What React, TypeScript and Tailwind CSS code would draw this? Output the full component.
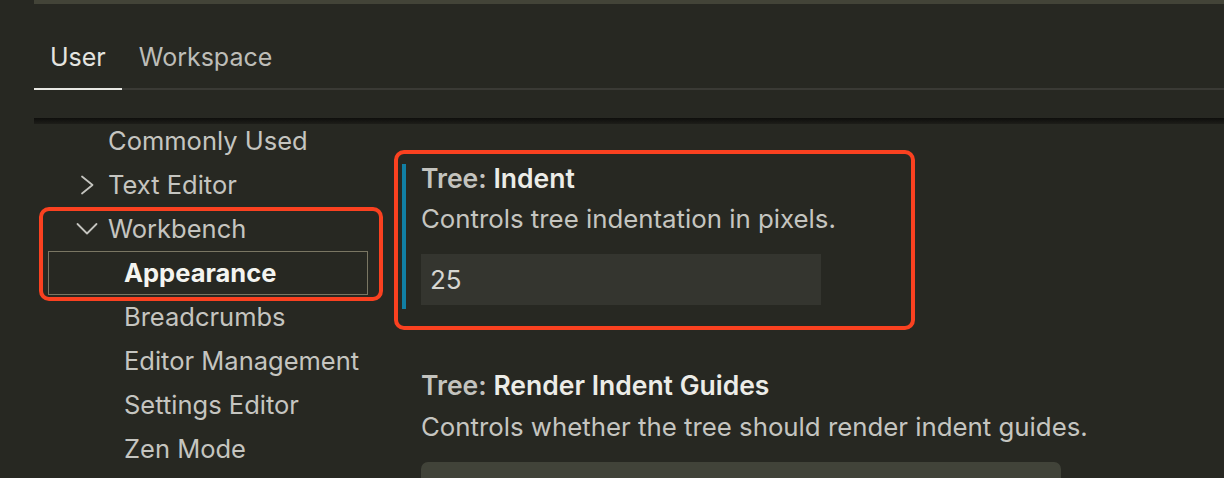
import React from 'react';

const font = { fontFamily: 'Inter, "Noto Sans", sans-serif' };

const ChevronRight = () => (
  <svg width="28" height="28" viewBox="0 0 28 28" fill="none">
    <polyline points="9,5.5 19.5,14 9,22.5" stroke="#c4c4bf" strokeWidth="1.8" strokeLinejoin="round" strokeLinecap="round" />
  </svg>
);

const ChevronDown = () => (
  <svg width="28" height="28" viewBox="0 0 28 28" fill="none">
    <polyline points="4.5,9 14,18.5 23.5,9" stroke="#c4c4bf" strokeWidth="1.8" strokeLinejoin="round" strokeLinecap="round" />
  </svg>
);

type Node = { label: string; level: number; chevron?: 'right' | 'down'; selected?: boolean };

const tree: Node[] = [
  { label: 'Commonly Used', level: 0 },
  { label: 'Text Editor', level: 0, chevron: 'right' },
  { label: 'Workbench', level: 0, chevron: 'down' },
  { label: 'Appearance', level: 1, selected: true },
  { label: 'Breadcrumbs', level: 1 },
  { label: 'Editor Management', level: 1 },
  { label: 'Settings Editor', level: 1 },
  { label: 'Zen Mode', level: 1 },
];

const TreeRow: React.FC<{ node: Node }> = ({ node }) => (
  <div
    className={
      'h-[44px] flex items-center pl-[24px] text-[25.5px] ' +
      (node.selected ? 'border border-[#7a7663] text-[#f4f4f0] font-bold' : 'border border-transparent text-[#c5c5c0]')
    }
  >
    {node.level === 1 && <div className="w-[16px] shrink-0" />}
    <div className="w-[28px] h-[28px] shrink-0 flex items-center justify-center">
      {node.chevron === 'right' && <ChevronRight />}
      {node.chevron === 'down' && <ChevronDown />}
    </div>
    <span className="ml-[7px] whitespace-nowrap">{node.label}</span>
  </div>
);

export default function App() {
  return (
    <div className="w-[1224px] h-[478px] bg-[#272822] overflow-hidden flex flex-col" style={font}>
      <div className="ml-[34px] h-[4px] bg-[#434438] shrink-0" />

      {/* tabs */}
      <div className="ml-[34px] flex border-b-2 border-[#3a3a35] h-[86px] shrink-0">
        <div className="px-[16px] pt-[38px] text-[25px] leading-[30px] text-[#e4e4e0] border-b-2 border-[#e8e8e4] -mb-[2px]">
          User
        </div>
        <div className="px-[17px] pt-[38px] text-[25px] leading-[30px] text-[#bdbdb8]">Workspace</div>
      </div>

      {/* body */}
      <div className="relative mt-[28px] ml-[34px] flex-1">
        <div className="absolute top-0 left-0 right-0 h-[6px] bg-gradient-to-b from-[#0e0e0c] to-[#1d1d19]" />

        <div className="flex pt-[1px]">
          <div className="ml-[14px] w-[320px] shrink-0 flex flex-col">
            {tree.map((n) => (
              <TreeRow key={n.label} node={n} />
            ))}
          </div>

          <div className="ml-[34px] flex flex-col pt-[45px]">
            <div className="border-l-4 border-[#117fa4] pl-[15px] pb-[4px]">
              <div className="h-[28px] leading-[28px] text-[26.5px] font-semibold whitespace-nowrap">
                <span className="text-[#c3c3be]">Tree: </span>
                <span className="text-[#ececE7]">Indent</span>
              </div>
              <div className="mt-[13px] h-[28px] leading-[28px] text-[25.8px] text-[#c5c5c0] whitespace-nowrap">
                Controls tree indentation in pixels.
              </div>
              <div className="mt-[21px] w-[400px] h-[51px] bg-[#34352f] flex items-center pl-[9px] text-[26px] text-[#d6d6d1]">
                25
              </div>
            </div>

            <div className="mt-[62px] border-l-4 border-transparent pl-[15px]">
              <div className="h-[28px] leading-[28px] text-[26.5px] font-semibold whitespace-nowrap">
                <span className="text-[#c3c3be]">Tree: </span>
                <span className="text-[#ececE7]">Render Indent Guides</span>
              </div>
              <div className="mt-[14px] h-[28px] leading-[28px] text-[25.8px] text-[#c5c5c0] whitespace-nowrap">
                Controls whether the tree should render indent guides.
              </div>
              <div className="mt-[21px] w-[640px] h-[52px] bg-[#414339] rounded-[7px]" />
            </div>
          </div>
        </div>
      </div>

      {/* annotation boxes */}
      <div className="absolute left-[39px] top-[207px] w-[344px] h-[94px] border-4 border-[#fa4120] rounded-[10px] pointer-events-none" />
      <div className="absolute left-[394px] top-[150px] w-[521px] h-[180px] border-4 border-[#fa4120] rounded-[10px] pointer-events-none" />
    </div>
  );
}
